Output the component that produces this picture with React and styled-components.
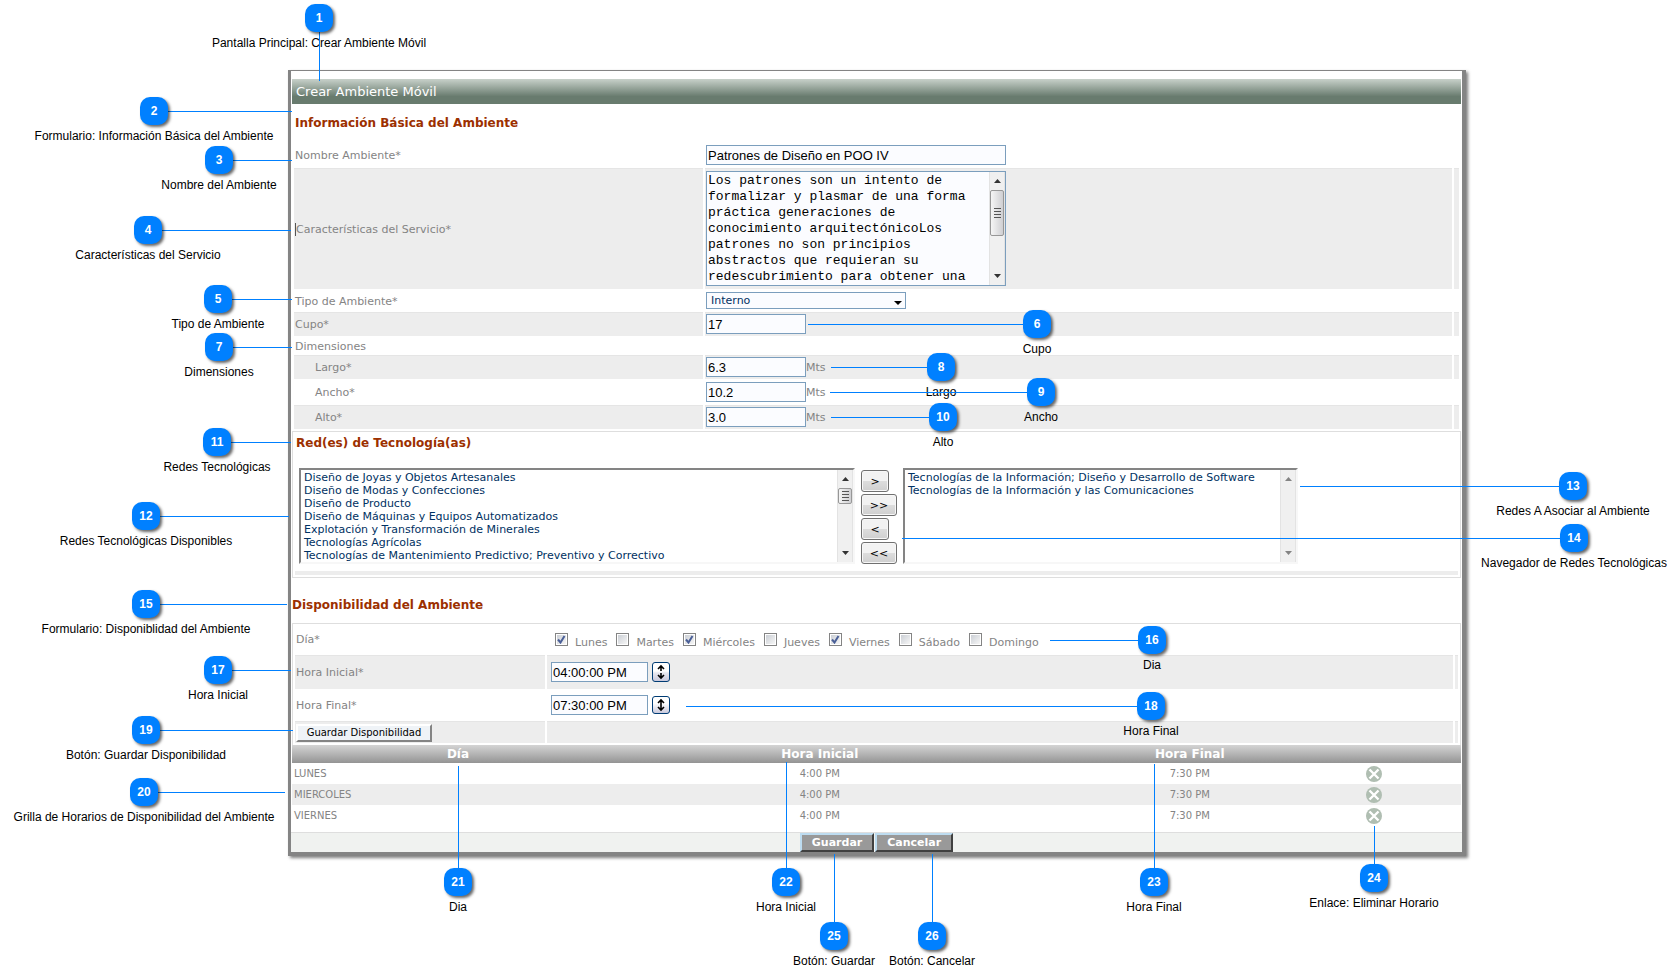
import { useState } from 'react'
import styled, { createGlobalStyle } from 'styled-components'

const verdana = `'DejaVu Sans', Verdana, sans-serif`
const arial = `'Liberation Sans', Arial, sans-serif`
const courier = `'Liberation Mono', 'Courier New', monospace`

const description = "Los patrones son un intento de formalizar y plasmar de una forma práctica generaciones de conocimiento arquitectónicoLos patrones no son principios abstractos que requieran su redescubrimiento para obtener una"

const dimensions = [
    { id: 'largo', name: 'Largo*', value: '6.3' },
    { id: 'ancho', name: 'Ancho*', value: '10.2' },
    { id: 'alto', name: 'Alto*', value: '3.0' },
]

const available = [
    'Diseño de Joyas y Objetos Artesanales',
    'Diseño de Modas y Confecciones',
    'Diseño de Producto',
    'Diseño de Máquinas y Equipos Automatizados',
    'Explotación y Transformación de Minerales',
    'Tecnologías Agrícolas',
    'Tecnologías de Mantenimiento Predictivo; Preventivo y Correctivo',
]

const selected = [
    'Tecnologías de la Información; Diseño y Desarrollo de Software',
    'Tecnologías de la Información y las Comunicaciones',
]

const moves = [
    { text: '>', label: 'Agregar' },
    { text: '>>', label: 'Agregar todas', wide: true },
    { text: '<', label: 'Quitar' },
    { text: '<<', label: 'Quitar todas', wide: true },
]

const days = [
    { name: 'Lunes', checked: true },
    { name: 'Martes', checked: false },
    { name: 'Miércoles', checked: true },
    { name: 'Jueves', checked: false },
    { name: 'Viernes', checked: true },
    { name: 'Sábado', checked: false },
    { name: 'Domingo', checked: false },
]

const schedule = ['LUNES', 'MIERCOLES', 'VIERNES']

// x, y: centre of the marker. to: where its line ends, sideways or (vertical) upwards / downwards
const callouts = [
    { n: 1, x: 319, y: 18, to: 81, vertical: true, text: 'Pantalla Principal: Crear Ambiente Móvil' },
    { n: 2, x: 154, y: 111, to: 292, text: 'Formulario: Información Básica del Ambiente' },
    { n: 3, x: 219, y: 160, to: 292, text: 'Nombre del Ambiente' },
    { n: 4, x: 148, y: 230, to: 291, text: 'Características del Servicio' },
    { n: 5, x: 218, y: 299, to: 292, text: 'Tipo de Ambiente' },
    { n: 6, x: 1037, y: 324, to: 808, text: 'Cupo' },
    { n: 7, x: 219, y: 347, to: 292, text: 'Dimensiones' },
    { n: 8, x: 941, y: 367, to: 831, text: 'Largo' },
    { n: 9, x: 1041, y: 392, to: 830, text: 'Ancho' },
    { n: 10, x: 943, y: 417, to: 831, text: 'Alto' },
    { n: 11, x: 217, y: 442, to: 291, text: 'Redes Tecnológicas' },
    { n: 12, x: 146, y: 516, to: 289, text: 'Redes Tecnológicas Disponibles' },
    { n: 13, x: 1573, y: 486, to: 1300, text: 'Redes A Asociar al Ambiente' },
    { n: 14, x: 1574, y: 538, to: 902, text: 'Navegador de Redes Tecnológicas' },
    { n: 15, x: 146, y: 604, to: 287, text: 'Formulario: Disponiblidad del Ambiente' },
    { n: 16, x: 1152, y: 640, to: 1050, text: 'Dia' },
    { n: 17, x: 218, y: 670, to: 291, text: 'Hora Inicial' },
    { n: 18, x: 1151, y: 706, to: 686, text: 'Hora Final' },
    { n: 19, x: 146, y: 730, to: 293, text: 'Botón: Guardar Disponibilidad' },
    { n: 20, x: 144, y: 792, to: 285, text: 'Grilla de Horarios de Disponibilidad del Ambiente' },
    { n: 21, x: 458, y: 882, to: 766, vertical: true, text: 'Dia' },
    { n: 22, x: 786, y: 882, to: 762, vertical: true, text: 'Hora Inicial' },
    { n: 23, x: 1154, y: 882, to: 764, vertical: true, text: 'Hora Final' },
    { n: 24, x: 1374, y: 878, to: 826, vertical: true, text: 'Enlace: Eliminar Horario' },
    { n: 25, x: 834, y: 936, to: 854, vertical: true, text: 'Botón: Guardar' },
    { n: 26, x: 932, y: 936, to: 854, vertical: true, text: 'Botón: Cancelar' },
]

const Scroll = ({ thumb }) => (
    <ScrollTrack aria-hidden="true" $disabled={!thumb}>
        <svg width="7" height="4" viewBox="0 0 7 4"><path d="M0 4H7L3.5 0Z" /></svg>
        {thumb && <Thumb $height={thumb} />}
        <svg width="7" height="4" viewBox="0 0 7 4"><path d="M0 0H7L3.5 4Z" /></svg>
    </ScrollTrack>
)

const FormRow = ({ id, label, shaded, height, indent, caret, children }) => (
    <Row $shaded={shaded} $height={height}>
        <LabelCell $indent={indent} $caret={caret}>
            {id ? <label htmlFor={id}>{label}</label> : label}
        </LabelCell>
        <FieldCell>{children}</FieldCell>
        <span />
    </Row>
)

const TimeRow = ({ id, label, value, shaded, height, split }) => (
    <Row $time $shaded={shaded} $height={height}>
        <LabelCell><label htmlFor={id}>{label}</label></LabelCell>
        <TimeCell>
            <TextInput id={id} $width={97} defaultValue={value} />
            <SpinButton type="button" aria-label={`Cambiar ${label}`} $split={split}>
                {split ? (
                    <svg width="10" height="16" viewBox="0 0 10 16">
                        <path d="M5 2V7M2 5L5 2L8 5M5 9V14M2 11L5 14L8 11" />
                    </svg>
                ) : (
                    <svg width="10" height="14" viewBox="0 0 10 14">
                        <path d="M5 2V12M2 5L5 2L8 5M2 9L5 12L8 9" />
                    </svg>
                )}
            </SpinButton>
        </TimeCell>
        <span />
    </Row>
)

const App = () => {

    const [week, setWeek] = useState(days)

    const toggleDay = (name) => {
        setWeek(week.map((day) => day.name === name ? { ...day, checked: !day.checked } : day))
    }

    return (
        <Page>
            <GlobalStyle />
            <Frame>
                <TitleBar>Crear Ambiente Móvil</TitleBar>
                <Heading>Información Básica del Ambiente</Heading>
                <Rows>
                    <FormRow id="nombre" label="Nombre Ambiente*" height={24}>
                        <TextInput id="nombre" $width={300} defaultValue="Patrones de Diseño en POO IV" />
                    </FormRow>
                    <FormRow id="caracteristicas" label="Características del Servicio*" height={121} shaded caret>
                        <AreaBox>
                            <textarea id="caracteristicas" defaultValue={description} />
                            <Scroll thumb={46} />
                        </AreaBox>
                    </FormRow>
                    <FormRow id="tipo" label="Tipo de Ambiente*" height={21}>
                        <SelectBox>
                            <select id="tipo" defaultValue="Interno">
                                <option>Interno</option>
                                <option>Externo</option>
                            </select>
                            <svg width="8" height="4" viewBox="0 0 8 4"><path d="M0 0H8L4 4Z" /></svg>
                        </SelectBox>
                    </FormRow>
                    <FormRow id="cupo" label="Cupo*" height={24} shaded>
                        <TextInput id="cupo" $width={100} defaultValue="17" />
                    </FormRow>
                    <FormRow label="Dimensiones" height={17} />
                    {dimensions.map((item, index) => (
                        <FormRow key={item.id} id={item.id} label={item.name} height={24} shaded={index !== 1} indent>
                            <TextInput id={item.id} $width={100} defaultValue={item.value} />
                            <span>Mts</span>
                        </FormRow>
                    ))}
                </Rows>

                <NetworkPanel>
                    <PanelHeading>Red(es) de Tecnología(as)</PanelHeading>
                    <Lists>
                        <ListBox $width={556}>
                            <select multiple aria-label="Redes Tecnológicas Disponibles">
                                {available.map((name) => <option key={name}>{name}</option>)}
                            </select>
                            <Scroll thumb={16} />
                        </ListBox>
                        <Moves>
                            {moves.map((move) => (
                                <MoveButton key={move.text} type="button" aria-label={move.label} $wide={move.wide}>{move.text}</MoveButton>
                            ))}
                        </Moves>
                        <ListBox $width={395}>
                            <select multiple aria-label="Redes A Asociar al Ambiente">
                                {selected.map((name) => <option key={name}>{name}</option>)}
                            </select>
                            <Scroll />
                        </ListBox>
                    </Lists>
                    <Strip />
                </NetworkPanel>

                <TimeHeading>Disponibilidad del Ambiente</TimeHeading>
                <TimePanel>
                    <Row $time $height={30}>
                        <LabelCell>Día*</LabelCell>
                        <Days>
                            {week.map((day) => (
                                <Day key={day.name}>
                                    <input type="checkbox" checked={day.checked} onChange={() => toggleDay(day.name)} />
                                    {day.name}
                                </Day>
                            ))}
                        </Days>
                        <span />
                    </Row>
                    <TimeRow id="inicial" label="Hora Inicial*" value="04:00:00 PM" height={34} shaded split />
                    <TimeRow id="final" label="Hora Final*" value="07:30:00 PM" height={30} />
                    <Row $time $shaded $height={22}>
                        <LabelCell><SaveTime type="button">Guardar Disponibilidad</SaveTime></LabelCell>
                        <span />
                        <span />
                    </Row>
                </TimePanel>

                <Grid>
                    <thead>
                        <tr>
                            <th scope="col">Día</th>
                            <th scope="col">Hora Inicial</th>
                            <th scope="col">Hora Final</th>
                            <td />
                        </tr>
                    </thead>
                    <tbody>
                        {schedule.map((day) => (
                            <tr key={day}>
                                <td>{day}</td>
                                <td>4:00 PM</td>
                                <td>7:30 PM</td>
                                <td>
                                    <a href="#eliminar" aria-label={`Eliminar ${day}`}>
                                        <svg width="16" height="16" viewBox="0 0 16 16">
                                            <circle cx="8" cy="8" r="8" fill="#b0beb2" />
                                            <path d="M3.5 3.5L12.5 12.5M12.5 3.5L3.5 12.5" stroke="#fff" strokeWidth="2.4" />
                                        </svg>
                                    </a>
                                </td>
                            </tr>
                        ))}
                    </tbody>
                </Grid>
                <Footer>
                    <FooterButton type="submit">Guardar</FooterButton>
                    <FooterButton type="button">Cancelar</FooterButton>
                </Footer>
            </Frame>

            {callouts.map((item) => (
                <div key={item.n}>
                    <Caption $x={item.x} $y={item.y}>{item.text}</Caption>
                    <Line $x={item.x} $y={item.y} $to={item.to} $vertical={item.vertical} />
                    <Badge $x={item.x} $y={item.y}>{item.n}</Badge>
                </div>
            ))}
        </Page>
    )
}

const GlobalStyle = createGlobalStyle`
    *{
        box-sizing: border-box;
    }

    body{
        margin: 0;
        background: #fff;
    }
`

const Page = styled.div`
    position: relative;
    min-height: 100vh;
    padding: 70px 210px 0 288px;
    overflow: hidden;
    font-family: ${verdana};
    font-size: 11px;
    color: #848484;
`

const Frame = styled.form`
    padding-top: 8px;
    border: solid #848484;
    border-width: 1px 4px 4px 3px;
    box-shadow: 2px 2px 3px rgba(0, 0, 0, 0.5);
    background: #fff;
`

const TitleBar = styled.h1`
    height: 25px;
    margin: 0 1px;
    padding-left: 4px;
    background: linear-gradient(#c8d1ca, #687b6e 70%);
    color: #fff;
    font-size: 13px;
    font-weight: 400;
    line-height: 25px;
`

const Heading = styled.h2`
    margin: 11px 4px 12px;
    color: #9c3000;
    font-size: 12px;
    font-weight: 700;
    line-height: 16px;
`

const PanelHeading = styled(Heading)`
    margin: 3px 3px 17px;
`

const TimeHeading = styled(Heading)`
    margin: 19px 1px 10px;
`

const Rows = styled.div`
    display: flex;
    flex-direction: column;
    gap: 1px;
    margin: 0 3px 2px;
`

const Row = styled.div`
    display: grid;
    grid-template-columns: ${({ $time }) => $time ? '250fr 906fr 3px' : '409fr 747fr 5px'};
    gap: 2px;
    min-height: ${({ $height }) => $height}px;

    > *{
        min-width: 0;
        background: ${({ $shaded }) => $shaded ? '#ededed' : 'transparent'};
        box-shadow: inset 0 1px ${({ $shaded }) => $shaded ? '#e5e5e5' : 'transparent'};
    }
`

const LabelCell = styled.div`
    display: flex;
    align-items: center;
    padding-top: 1px;
    padding-left: ${({ $indent }) => $indent ? 21 : 1}px;

    label{
        border-left: ${({ $caret }) => $caret ? '1px solid #555' : 'none'};
    }
`

const FieldCell = styled.div`
    display: flex;
    align-items: center;
    padding-left: 1px;
`

const TimeCell = styled(FieldCell)`
    gap: 4px;
    padding-left: 4px;
`

const TextInput = styled.input`
    width: ${({ $width }) => $width}px;
    height: 20px;
    padding: 0 1px;
    border: 1px solid #7b9ebd;
    background: #fbfcff;
    color: #000;
    font-family: ${arial};
    font-size: 13px;
`

const ScrollTrack = styled.span`
    display: flex;
    flex-direction: column;
    align-items: center;
    flex: none;
    gap: 7px;
    width: 16px;
    padding: 7px 0;
    border: solid #e3e3e3;
    border-width: 0 1px;
    background: #f0f0f0;

    svg{
        flex: none;
        fill: ${({ $disabled }) => $disabled ? '#848484' : '#333'};
    }

    svg:last-child{
        margin-top: auto;
    }
`

const Thumb = styled.span`
    flex: none;
    width: 14px;
    height: ${({ $height }) => $height}px;
    border: 1px solid #979797;
    border-radius: 2px;
    background:
        repeating-linear-gradient(#555 0 1px, transparent 1px 3px) center / 7px 10px no-repeat,
        linear-gradient(90deg, #f5f5f5, #cfcfd2);
`

const AreaBox = styled.div`
    display: flex;
    width: 300px;
    height: 115px;
    border: 1px solid #7b9ebd;

    textarea{
        flex: 1;
        min-width: 0;
        padding: 1px 1px 0;
        border: none;
        background: #fbfcff;
        color: #000;
        font-family: ${courier};
        font-size: 13px;
        line-height: 16px;
        resize: none;
    }
`

const SelectBox = styled.div`
    position: relative;
    width: 200px;

    select{
        display: block;
        width: 100%;
        height: 17px;
        padding: 0 4px;
        appearance: none;
        border: 1px solid #7b9ebd;
        border-radius: 0;
        background: #fbfcff;
        color: #003162;
        font-family: ${verdana};
        font-size: 11px;
    }

    svg{
        position: absolute;
        right: 4px;
        bottom: 4px;
        pointer-events: none;
    }
`

const NetworkPanel = styled.section`
    margin: 0 1px;
    padding-bottom: 2px;
    border: 1px solid #dedede;
`

const Lists = styled.div`
    display: flex;
    align-items: flex-start;
    gap: 6px;
    padding-left: 6px;
`

const ListBox = styled.div`
    display: flex;
    width: ${({ $width }) => $width}px;
    height: 96px;
    border: 2px solid;
    border-color: #848484 #f7f7f7 #f7f7f7 #848484;

    select{
        flex: 1;
        min-width: 0;
        height: 91px;
        margin-top: 1px;
        padding: 0 1px;
        border: none;
        border-radius: 0;
        background: #fff;
        color: #003162;
        font-family: ${verdana};
        font-size: 11px;
    }

    option{
        min-height: 13px;
        padding: 0 2px;
        line-height: 13px;
    }
`

const Moves = styled.div`
    display: flex;
    flex-direction: column;
    gap: 2px;
    width: 36px;
    padding-top: 2px;
`

const MoveButton = styled.button`
    width: ${({ $wide }) => $wide ? 36 : 28}px;
    height: 22px;
    padding: 0;
    border: 1px solid #707070;
    border-radius: 3px;
    background: linear-gradient(#f2f2f2 50%, #dddddd 50%, #cfcfcf);
    box-shadow: inset 0 0 0 1px #f7f7f7;
    color: #000;
    font-family: ${verdana};
    font-size: 11px;
`

const Strip = styled.div`
    height: 4px;
    margin: 7px 2px 0;
    background: #ededed;
`

const TimePanel = styled.section`
    display: flex;
    flex-direction: column;
    gap: 1px;
    margin: 0 1px;
    padding: 0 2px 2px;
    border: solid #dedede;
    border-width: 1px 1px 0;
`

const Days = styled.div`
    display: flex;
    align-items: center;
    flex-wrap: wrap;
    gap: 9px;
    padding-top: 4px;
    padding-left: 8px;
`

const Day = styled.label`
    display: flex;
    align-items: baseline;
    gap: 7px;

    input{
        width: 13px;
        height: 13px;
        margin: 0;
        padding: 1px;
        appearance: none;
        border: 1px solid #848484;
        background: linear-gradient(135deg, #cbcfd5, #f6f6f6) content-box;
    }

    input:checked{
        background:
            url("data:image/svg+xml,%3Csvg xmlns='http://www.w3.org/2000/svg' width='9' height='9' fill='none' stroke='%234a5f97' stroke-width='2'%3E%3Cpath d='M1 4.5L3.5 7.5L7.5 1'/%3E%3C/svg%3E") center no-repeat,
            linear-gradient(135deg, #cbcfd5, #f6f6f6) content-box;
    }
`

const SpinButton = styled.button`
    display: flex;
    align-items: center;
    justify-content: center;
    width: 18px;
    height: ${({ $split }) => $split ? 20 : 18}px;
    padding: 0;
    border: 1px solid #003c74;
    border-radius: 3px;
    background: ${({ $split }) => $split
        ? 'linear-gradient(#fff 45%, #e8e8f0 55%, #c9c9dc)'
        : 'linear-gradient(#fff 40%, #c9c9dc)'};

    svg{
        fill: none;
        stroke: #000;
        stroke-width: 1.6;
    }
`

const SaveTime = styled.button`
    width: 136px;
    height: 18px;
    padding: 0;
    border: 2px solid;
    border-color: #fff #848484 #848484 #fff;
    background: #eff3f7;
    color: #000;
    font-family: ${verdana};
    font-size: 10px;
    line-height: 12px;
`

const Grid = styled.table`
    width: calc(100% - 2px);
    margin: 0 1px 6px;
    border-collapse: collapse;
    table-layout: fixed;
    font-size: 10px;

    th, td{
        height: 21px;
        padding: 0 2px;
        text-align: center;
    }

    thead tr{
        background: linear-gradient(#d4d4d4, #949494);
    }

    thead th, thead td{
        height: 18px;
        color: #fff;
        font-size: 12px;
    }

    th:nth-child(1){
        width: 28.4%;
    }

    th:nth-child(2){
        width: 33.5%;
    }

    th:nth-child(3){
        width: 29.8%;
    }

    td:first-child, td:last-child{
        text-align: left;
    }

    tbody tr:nth-child(even){
        background: #ededed;
    }

    svg{
        display: block;
    }
`

const Footer = styled.footer`
    display: flex;
    justify-content: center;
    gap: 1px;
    border-top: 1px solid #dedede;
    background: #f0f2f0;
`

const FooterButton = styled.button`
    height: 19px;
    padding: 0 10px;
    border: 2px solid;
    border-color: #bddcf0 #404040 #404040 #bddcf0;
    background: #999;
    color: #fff;
    font-family: ${verdana};
    font-size: 11px;
    font-weight: 700;
    line-height: 13px;
`

const Badge = styled.span`
    position: absolute;
    left: ${({ $x }) => $x - 14}px;
    top: ${({ $y }) => $y - 14}px;
    width: 28px;
    height: 28px;
    border-radius: 10px;
    background: #0080ff;
    box-shadow: 2px 2px 3px rgba(0, 0, 0, 0.6);
    color: #fff;
    font-family: ${arial};
    font-size: 12px;
    font-weight: 700;
    line-height: 28px;
    text-align: center;
`

const Caption = styled.span`
    position: absolute;
    left: ${({ $x }) => $x}px;
    top: ${({ $y }) => $y + 17}px;
    transform: translateX(-50%);
    color: #000;
    font-family: ${arial};
    font-size: 12px;
    line-height: 16px;
    white-space: nowrap;
`

const Line = styled.i`
    position: absolute;
    left: ${({ $x, $to, $vertical }) => $vertical ? $x : Math.min($x, $to)}px;
    top: ${({ $y, $to, $vertical }) => $vertical ? Math.min($y, $to) : $y}px;
    width: ${({ $x, $to, $vertical }) => $vertical ? 1 : Math.abs($to - $x)}px;
    height: ${({ $y, $to, $vertical }) => $vertical ? Math.abs($to - $y) : 1}px;
    background: #0080ff;
    pointer-events: none;
`

export default App
